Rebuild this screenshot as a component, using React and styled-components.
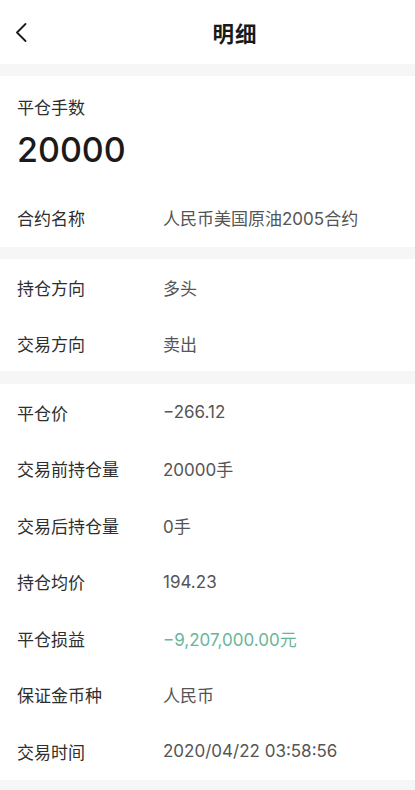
import React from 'react';
import styled, { createGlobalStyle } from 'styled-components';

const GlobalStyle = createGlobalStyle`
  html, body {
    margin: 0;
    padding: 0;
    background: #ffffff;
  }
  body {
    font-family: Inter, "Liberation Sans", "Noto Sans CJK SC", sans-serif;
    -webkit-font-smoothing: antialiased;
  }
`;

const Page = styled.div`
  width: 415px;
  min-height: 790px;
  background: #f6f6f6;
  display: flex;
  flex-direction: column;
`;

const Header = styled.header`
  height: 64px;
  background: #fff;
  display: flex;
  align-items: center;
`;

const BackButton = styled.button`
  width: 42px;
  height: 44px;
  padding: 0;
  border: none;
  background: none;
  display: flex;
  align-items: center;
  justify-content: center;
  cursor: pointer;
`;

const Title = styled.h1`
  flex: 1;
  margin: 0 0 0 13px;
  text-align: center;
  font-size: 21.5px;
  font-weight: 700;
  color: #1a1a1a;
  letter-spacing: 1px;
`;

const Spacer = styled.div`
  height: ${(p) => p.$h}px;
  flex-shrink: 0;
`;

const Card = styled.section`
  background: #fff;
  padding-bottom: ${(p) => p.$pb || 0}px;
`;

const Lead = styled.div`
  padding: 20px 17px 17px;
  display: flex;
  flex-direction: column;
  gap: 8px;
`;

const LeadLabel = styled.div`
  font-size: 17px;
  line-height: 24px;
  color: #2e2e2e;
`;

const LeadValue = styled.div`
  font-size: 34px;
  line-height: 44px;
  font-weight: 500;
  color: #1a1a1a;
`;

const Row = styled.div`
  height: ${(p) => p.$h || 56}px;
  display: flex;
  align-items: center;
  padding: 0 17px;
  font-size: 17px;
`;

const Label = styled.span`
  width: 146px;
  flex-shrink: 0;
  color: #2e2e2e;
`;

const Value = styled.span`
  color: ${(p) => (p.$green ? '#68b699' : '#555555')};
`;

const ChevronLeft = () => (
  <svg width="14" height="20" viewBox="0 0 14 20" fill="none">
    <path d="M11.5 2 L3 10.5 L11.5 19" stroke="#1a1a1a" strokeWidth="1.8" strokeLinecap="round" strokeLinejoin="round" />
  </svg>
);

const groups = [
  [['持仓方向', '多头'], ['交易方向', '卖出']],
  [
    ['平仓价', '−266.12'],
    ['交易前持仓量', '20000手'],
    ['交易后持仓量', '0手'],
    ['持仓均价', '194.23'],
    ['平仓损益', '−9,207,000.00元', true],
    ['保证金币种', '人民币'],
    ['交易时间', '2020/04/22 03:58:56'],
  ],
];

export default function App() {
  return (
    <>
      <GlobalStyle />
      <Page>
        <Header>
          <BackButton aria-label="返回">
            <ChevronLeft />
          </BackButton>
          <Title>明细</Title>
        </Header>
        <Spacer $h={12} />
        <Card $pb={2}>
          <Lead>
            <LeadLabel>平仓手数</LeadLabel>
            <LeadValue>20000</LeadValue>
          </Lead>
          <Row>
            <Label>合约名称</Label>
            <Value>人民币美国原油2005合约</Value>
          </Row>
        </Card>
        <Spacer $h={12} />
        <Card>
          {groups[0].map(([l, v]) => (
            <Row key={l}>
              <Label>{l}</Label>
              <Value>{v}</Value>
            </Row>
          ))}
        </Card>
        <Spacer $h={13} />
        <Card>
          {groups[1].map(([l, v, green]) => (
            <Row key={l} $h={56.5}>
              <Label>{l}</Label>
              <Value $green={green}>{v}</Value>
            </Row>
          ))}
        </Card>
      </Page>
    </>
  );
}
